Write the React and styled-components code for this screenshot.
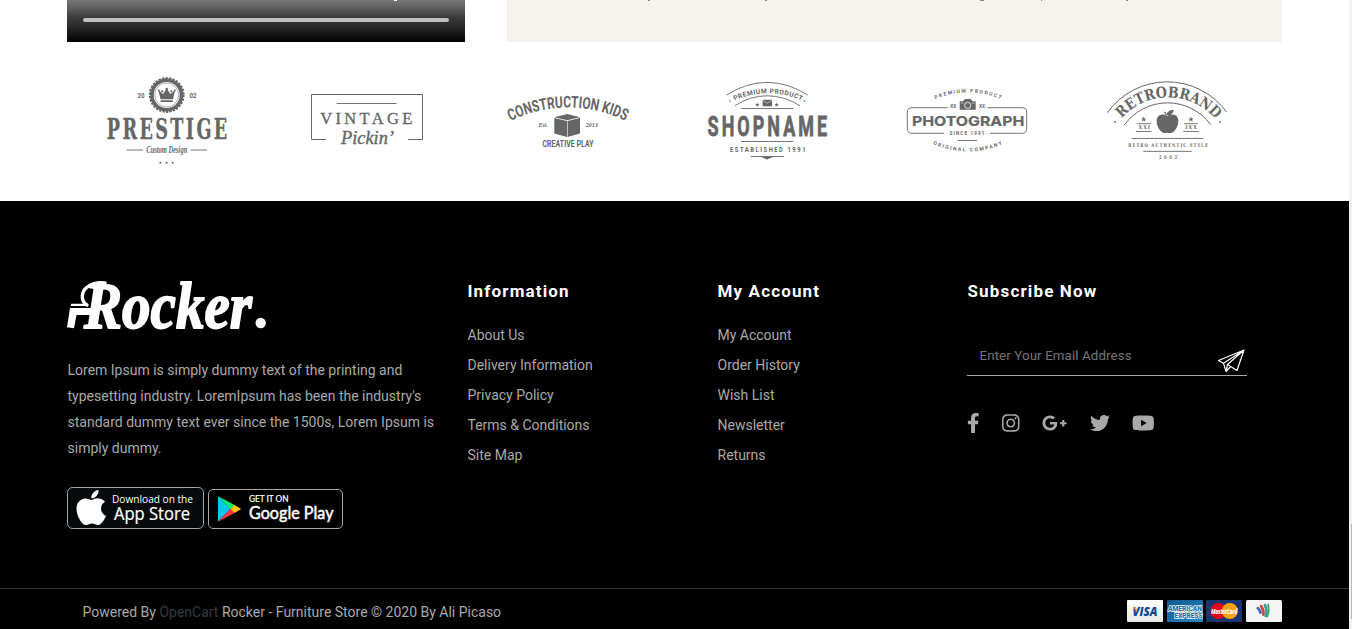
import React from "react";
import styled, { createGlobalStyle } from "styled-components";
import { FaApple, FaFacebookF, FaInstagram, FaGooglePlusG, FaTwitter, FaYoutube } from "react-icons/fa";

const GlobalStyle = createGlobalStyle`
  * { box-sizing: border-box; }
  html, body { margin: 0; background: #fff; overflow: hidden; }
  body { font-family: Roboto, "Liberation Sans", sans-serif; font-size: 14px; }
`;

const Page = styled.div`
  display: flex;
  width: 1352px;
  height: 629px;
  overflow: hidden;
`;
const Content = styled.main`
  width: 1349px;
  display: flex;
  flex-direction: column;
`;
const ScrollTrack = styled.div`
  width: 3px;
  background: #f1f1f1;
  padding: 524px 0 0 2px;
`;
const ScrollThumb = styled.div`
  height: 95px;
  background: #b9b9b9;
`;

const MediaRow = styled.section`
  display: flex;
  gap: 42px;
  height: 42px;
  padding-left: 67px;
`;
const Video = styled.div`
  width: 398px;
  background: linear-gradient(#777 0, #5a5a5a 22%, #3a3a3a 42%, #2a2a2a 62%, #171717 80%, #000 100%);
  svg { display: block; }
`;
const VideoProgress = styled.div`
  height: 4px;
  margin: 17px 16px 0;
  border-radius: 2px;
  background: #bfbfbf;
`;
const Testimonial = styled.div`
  width: 775px;
  background: #f6f2ed;
  svg { display: block; }
`;

const Brands = styled.section`
  display: flex;
  height: 159px;
  padding: 23px 0 0 67px;
`;
const BrandMark = styled.svg`
  width: 200px;
  height: 110px;
  fill: #666;
  overflow: visible;
`;

const Footer = styled.footer`
  flex: 1;
  background: #000;
  color: #a9a9a9;
`;
const FooterMain = styled.div`
  display: flex;
  height: 387px;
  padding: 80px 67px 0 67.5px;
`;
const About = styled.div`
  width: 400px;
`;
const RockerLogo = styled.svg`
  display: block;
  width: 200px;
  height: 50px;
  margin-left: -0.5px;
  fill: #fff;
  overflow: visible;
`;
const Blurb = styled.p`
  width: 380px;
  margin: 26px 0 0;
  line-height: 26px;
  white-space: pre-line;
`;
const Badges = styled.div`
  display: flex;
  align-items: flex-end;
  gap: 4px;
  margin: 26px 0 0 -0.5px;
  svg { display: block; }
`;
const Column = styled.div`
  width: ${(p) => p.$width || 250}px;
`;
const Heading = styled.h5`
  margin: 0;
  color: #fff;
  font-size: 17px;
  font-weight: 700;
  line-height: 20px;
  letter-spacing: 1.15px;
`;
const Links = styled.ul`
  margin: 19px 0 0;
  padding: 0;
  list-style: none;
  line-height: 30px;
`;
const Subscribe = styled.div`
  display: flex;
  justify-content: space-between;
  width: 280px;
  height: 41px;
  margin: 34px 0 0 -0.5px;
  padding: 0 2px 0 12.5px;
  border-bottom: 1px solid #a9a9a9;
`;
const Placeholder = styled.span`
  color: #757575;
  font-size: 13.33px;
  line-height: 41px;
  letter-spacing: 0.1px;
`;
const Plane = styled.svg`
  width: 28px;
  height: 24px;
  margin-top: 14px;
  fill: none;
  stroke: #fff;
  stroke-width: 1.2;
  stroke-linejoin: round;
`;
const Social = styled.div`
  display: flex;
  gap: 22.5px;
  margin: 37px 0 0 -0.5px;
  color: #a9a9a9;
`;
const SocialLink = styled.span`
  flex: none;
  width: ${(p) => p.$width}px;
  height: 20px;
  svg { display: block; width: 100%; height: 100%; }
`;
const BottomBar = styled.div`
  display: flex;
  justify-content: space-between;
  height: 41px;
  padding: 11px 67px 0 82.5px;
  border-top: 1px solid #333;
  line-height: 24px;
`;
const Dim = styled.span`
  color: #333b42;
`;
const Cards = styled.svg`
  width: 155px;
  height: 22px;
`;

const SANS = 'Roboto, sans-serif';
const SERIF = '"Liberation Serif", serif';
const SLAB = '"DejaVu Serif Condensed", "DejaVu Serif", serif';

function Label({ x, y, w, size, font = SANS, weight = 700, italic, children, ...rest }) {
  return (
    <text x={x} y={y} textLength={w} lengthAdjust="spacingAndGlyphs" fontFamily={font}
      fontSize={size} fontWeight={weight} fontStyle={italic ? "italic" : "normal"} {...rest}>{children}</text>
  );
}

/* Narrow capitals: glyphs are squeezed horizontally and spaced evenly over the width. */
function Narrow({ x, y, w, size, k = 0.8, font = SANS, weight = 700, children, ...rest }) {
  return (
    <text transform={`translate(${x} ${y}) scale(${k} 1)`} textLength={w / k} fontFamily={font}
      fontSize={size} fontWeight={weight} {...rest}>{children}</text>
  );
}

function Arced({ id, d, w, size, font = SANS, weight = 700, adjust = "spacing", children, ...rest }) {
  return (
    <>
      <path id={id} d={d} fill="none" />
      <text fontFamily={font} fontSize={size} fontWeight={weight} textLength={w} lengthAdjust={adjust} {...rest}>
        <textPath href={`#${id}`} textLength={w} lengthAdjust={adjust}>{children}</textPath>
      </text>
    </>
  );
}

function Line({ x1, x2, y, h = 0.9 }) {
  return <rect x={x1} y={y - h / 2} width={x2 - x1} height={h} />;
}

function Star({ x, y, r }) {
  const pts = Array.from({ length: 10 }, (_, i) => {
    const a = (Math.PI * i) / 5 - Math.PI / 2;
    const q = i % 2 ? r * 0.42 : r;
    return `${x + q * Math.cos(a)},${y + q * Math.sin(a)}`;
  }).join(" ");
  return <polygon points={pts} />;
}

function Prestige() {
  return (
    <BrandMark viewBox="0 0 200 110">
      <circle cx="99.7" cy="30" r="16.6" />
      <circle cx="99.7" cy="30" r="16.9" fill="none" stroke="#666" strokeWidth="2" strokeDasharray="2.3 1.24" />
      <circle cx="99.7" cy="30" r="13" fill="#fff" />
      <circle cx="99.7" cy="30" r="12" fill="none" stroke="#666" strokeWidth="0.5" />
      <path d="M91.5 25.3 96 29 99.7 23.5 103.4 29 108 25.3 106 34.2H93.5zM93.6 35.2h12.2v1.7H93.6z" />
      <circle cx="99.7" cy="24" r="1.3" /><circle cx="95.2" cy="26.3" r="1.1" /><circle cx="104.3" cy="26.3" r="1.1" />
      <circle cx="91.8" cy="25.6" r="1" /><circle cx="107.8" cy="25.6" r="1" />
      <Label x={70.5} y={32.8} w={7} size={6.6}>20</Label>
      <Label x={122.5} y={32.8} w={7} size={6.6}>02</Label>
      <Narrow x={39.8} y={74} w={120.5} size={28} k={0.7} font={SLAB} stroke="#666" strokeWidth="0.3">PRESTIGE</Narrow>
      <Line x1={59.7} x2={76} y={85} /><Line x1={123.7} x2={140} y={85} />
      <Label x={79.3} y={87.8} w={41} size={10} font={SERIF} italic>Custom Design</Label>
      <circle cx="93.3" cy="97.7" r="1" /><circle cx="99.7" cy="97.7" r="1" /><circle cx="105.7" cy="97.7" r="1" />
    </BrandMark>
  );
}

function Vintage() {
  return (
    <BrandMark viewBox="0 0 200 110">
      <path d="M59 74.5H44.5V29.5H155.5V74.5H141.3" fill="none" stroke="#666" />
      <Line x1={69.7} x2={129.7} y={38.5} />
      <text x="53.3" y="58.6" textLength="92" fontFamily={SERIF} fontSize="16.5" stroke="#666" strokeWidth="0.3">VINTAGE</text>
      <Label x={74} y={79.3} w={53} size={19} font={SERIF} weight={400} italic stroke="#666" strokeWidth="0.4">Pickin’</Label>
    </BrandMark>
  );
}

function ConstructionKids() {
  return (
    <BrandMark viewBox="0 0 200 110">
      <Arced id="kids" d="M43.5 56A131 131 0 0 1 159 56" w={119} size={16.2} adjust="spacingAndGlyphs">CONSTRUCTION KIDS</Arced>
      <path d="M87.3 52.2 100.3 49 113 52.2 100.3 55.2zM87.3 52.9 100 56V72L87.3 68.4zM113 52.9 100.6 56V72L113 68.4z" />
      <Label x={71.5} y={61.8} w={9.5} size={6.5} font={SERIF} italic>Est.</Label>
      <Label x={118.7} y={61.8} w={12} size={6.5} font={SERIF} italic>2013</Label>
      <Label x={75.5} y={82} w={51} size={9.3}>CREATIVE PLAY</Label>
    </BrandMark>
  );
}

function Shopname() {
  return (
    <BrandMark viewBox="0 0 200 110">
      <g fill="none" stroke="#666" strokeWidth="0.9">
        <path d="M59.7 30Q79 17.4 100 17.4T140.7 30" />
        <path d="M68 40.7Q83 30.8 100 30.8T133 40.7" />
      </g>
      <Arced id="shop" d="M67.5 35.5A82 82 0 0 1 134.5 35.5" w={69} size={6.6}>PREMIUM PRODUCT</Arced>
      <circle cx="63" cy="36" r="0.8" /><circle cx="137.3" cy="36" r="0.8" />
      <rect x="95.7" y="34.7" width="9.4" height="6.6" />
      <path d="M96 35.3 100.4 38.3 104.8 35.3" fill="none" stroke="#fff" strokeWidth="0.5" />
      <Star x={90.3} y={39.7} r={2.3} /><Star x={109.7} y={39.7} r={2.3} />
      <Line x1={74} x2={126.3} y={43.6} />
      <Narrow x={40.6} y={70.6} w={119.5} size={28} k={0.64} stroke="#666" strokeWidth="0.8">SHOPNAME</Narrow>
      <Line x1={74} x2={126.3} y={76.5} />
      <Narrow x={63} y={87.2} w={75.5} size={7.8} k={0.75}>ESTABLISHED 1991</Narrow>
      <Line x1={83.7} x2={117} y={91.4} />
      <path d="M93 91.4H107L100 94.4z" />
    </BrandMark>
  );
}

function Photograph() {
  return (
    <BrandMark viewBox="0 0 200 110">
      <Arced id="photoTop" d="M68.3 34.3A82 82 0 0 1 134 34.3" w={67} size={5}>PREMIUM PRODUCT</Arced>
      <Label x={83.3} y={43.4} w={6} size={5.4}>XX</Label><Label x={112} y={43.4} w={6} size={5.4}>XX</Label>
      <path d="M92.7 36.2H96L98 34H103.5L105.5 36.2H108.7V44.7H92.7z" />
      <circle cx="100.7" cy="40.4" r="3.1" fill="none" stroke="#fff" strokeWidth="0.8" />
      <path d="M94 38h2.4M105 38h2.4" stroke="#fff" strokeWidth="0.6" />
      <path d="M80.7 42.7H45Q40.3 42.7 40.3 47.5V63.5Q40.3 68.3 45 68.3H77M123 68.3H155Q159.7 68.3 159.7 63.5V47.5Q159.7 42.7 155 42.7H120.3" fill="none" stroke="#666" strokeWidth="0.9" />
      <Label x={45} y={60.7} w={112.3} size={13.8} font="Inter, sans-serif" stroke="#666" strokeWidth="0.2">PHOTOGRAPH</Label>
      <text x="80" y="69.9" textLength="40" fontFamily={SANS} fontSize="4.6" fontWeight="700">·SINCE 1991·</text>
      <Line x1={90.7} x2={110} y={75.4} />
      <Arced id="photoBottom" d="M66 79A86 86 0 0 0 136 79" w={71} size={5}>ORIGINAL COMPANY</Arced>
    </BrandMark>
  );
}

function Retrobrand() {
  return (
    <BrandMark viewBox="0 0 200 110">
      <g fill="none" stroke="#666" strokeWidth="1">
        <path d="M40.3 47.7A73.5 73.5 0 0 1 159.7 47.2" />
        <path d="M57.3 60A53.5 53.5 0 0 1 143.7 59.6" />
      </g>
      <Arced id="retro" d="M54.7 53.3A62 62 0 0 1 149 55" w={106} size={15} font={SLAB} adjust="spacingAndGlyphs">RETROBRAND</Arced>
      <circle cx="48" cy="57" r="0.9" /><circle cx="153" cy="57" r="0.9" />
      <Star x={76.7} y={54.4} r={2.8} /><Star x={124} y={54.4} r={2.8} />
      <Line x1={70.3} x2={84} y={58.7} /><Line x1={117} x2={130.7} y={58.7} />
      <text x="71.5" y="64.4" textLength="11.5" fontFamily={SLAB} fontSize="5.2" fontWeight="700">XXI</text>
      <text x="118.3" y="64.4" textLength="11.5" fontFamily={SLAB} fontSize="5.2" fontWeight="700">IXX</text>
      <Line x1={69} x2={84.7} y={66.4} /><Line x1={116.3} x2={131.7} y={66.4} />
      <path d="M100 51.2C103 49 108 48.6 110.3 52 113 57 110 64 106 67.3 104 68.8 102.3 67.7 100.5 67.7S97 68.8 95 67.3C91 64 88 57 90.6 52.3 92.6 48.8 97 49 100 51.2zM99.7 50.2C99.6 46.8 103 44.8 106.8 45 106.2 48.5 103 50.6 99.7 50.2zM97 47.2 98 46.6Q99.4 48 99.8 50.8L99 51Q98.5 48.7 97 47.2z" />
      <Line x1={64.7} x2={136.3} y={73.4} />
      <Narrow x={61.3} y={82} w={79.5} size={5.2} font={SLAB}>RETRO AUTHENTIC STYLE</Narrow>
      <Line x1={76.3} x2={124.7} y={86.3} />
      <Narrow x={92} y={94} w={18} size={5.2} font={SLAB}>2002</Narrow>
    </BrandMark>
  );
}

function AppStoreBadge() {
  return (
    <svg width="137" height="42" viewBox="0 0 137 42">
      <rect x="0.5" y="0.5" width="136" height="41" rx="5" fill="#060a0b" stroke="#a6a6a6" />
      <g transform="translate(4.2 0.5)"><FaApple size={40} color="#fff" /></g>
      <g fill="#fff" fontFamily='"Open Sans", sans-serif'>
        <text x="45" y="15.6" fontSize="10.8" textLength="81" lengthAdjust="spacingAndGlyphs">Download on the</text>
        <text x="47" y="33" fontSize="17.8" fontWeight="500" textLength="76" lengthAdjust="spacingAndGlyphs" stroke="#fff" strokeWidth="0.2">App Store</text>
      </g>
    </svg>
  );
}

function GooglePlayBadge() {
  return (
    <svg width="135" height="40" viewBox="0 0 135 40">
      <rect x="0.5" y="0.5" width="134" height="39" rx="4.5" fill="#000" stroke="#a6a6a6" />
      <path d="M10 7.5V32.5L22.3 20z" fill="#00c8f8" />
      <path d="M10 7.2 26.7 16 22.3 20.2z" fill="#00ee76" />
      <path d="M26.5 16 33.2 20 26.5 24 22.3 20z" fill="#ffc900" />
      <path d="M10 32.8 26.7 24 22.3 19.8z" fill="#f9374b" />
      <g fill="#fff" stroke="#fff">
        <text x="41" y="13" fontFamily="Lato, sans-serif" fontSize="8.6" strokeWidth="0.2" textLength="39.5" lengthAdjust="spacingAndGlyphs">GET IT ON</text>
        <text x="41" y="30.4" fontFamily="Lato, sans-serif" fontSize="17.6" strokeWidth="0.5" textLength="84.5" lengthAdjust="spacingAndGlyphs">Google Play</text>
      </g>
    </svg>
  );
}

function PaymentCards() {
  return (
    <Cards viewBox="0 0 155 22">
      <defs>
        <linearGradient id="amex" x2="1" y2="1"><stop stopColor="#12568c" /><stop offset="1" stopColor="#2589c8" /></linearGradient>
        <linearGradient id="visa" y2="1" x2="0"><stop stopColor="#fff" /><stop offset="1" stopColor="#e8e8e8" /></linearGradient>
      </defs>
      <rect width="36" height="22" rx="1" fill="url(#visa)" />
      <text x="5.5" y="15.6" fontFamily="Open Sans, sans-serif" fontStyle="italic" fontWeight="800" fontSize="11.5" textLength="25" lengthAdjust="spacingAndGlyphs" fill="#0e4595">VISA</text>
      <path d="M5.8 7.3H9L10 12.5Q8.8 9 5.8 7.3z" fill="#f2ae14" />
      <rect x="40" width="36" height="22" rx="1" fill="url(#amex)" />
      <g fill="#1b6fa8" stroke="#fff" strokeWidth="1.3" paintOrder="stroke" fontFamily={SANS} fontWeight="900" fontSize="7.6">
        <text x="41" y="10.8" textLength="34" lengthAdjust="spacingAndGlyphs">AMERICAN</text>
        <text x="47.5" y="18.3" textLength="28" lengthAdjust="spacingAndGlyphs">EXPRESS</text>
      </g>
      <rect x="79" width="36" height="22" rx="1" fill="#16366f" />
      <circle cx="91.5" cy="11" r="8" fill="#e30613" /><circle cx="102.8" cy="11" r="8" fill="#fca311" />
      <text x="84.2" y="13.6" fontFamily={SANS} fontStyle="italic" fontWeight="900" fontSize="6.5" textLength="26" lengthAdjust="spacingAndGlyphs" fill="#fff">MasterCard</text>
      <rect x="119" width="36" height="22" rx="1.5" fill="#f5f5f5" />
      <g fill="none" strokeWidth="2.8" strokeLinecap="round">
        <path d="M130.8 8.2Q133 10 133.3 12.5" stroke="#3b6fb6" />
        <path d="M134 6Q137 10 136.3 14.5" stroke="#d8433b" />
        <path d="M138 5.3Q140.5 10 138.7 15.8" stroke="#3f9c9c" />
        <path d="M141 4.5Q142.8 10.5 140.2 16.5" stroke="#2fae62" strokeWidth="1.8" />
      </g>
    </Cards>
  );
}

const information = ["About Us", "Delivery Information", "Privacy Policy", "Terms & Conditions", "Site Map"];
const account = ["My Account", "Order History", "Wish List", "Newsletter", "Returns"];
const social = [
  [FaFacebookF, 12.5], [FaInstagram, 17.5], [FaGooglePlusG, 25], [FaTwitter, 20], [FaYoutube, 22.5],
];

function LinkColumn({ title, items }) {
  return (
    <Column>
      <Heading>{title}</Heading>
      <Links>{items.map((t) => <li key={t}>{t}</li>)}</Links>
    </Column>
  );
}

export default function App() {
  return (
    <Page>
      <GlobalStyle />
      <Content>
        <MediaRow>
          <Video>
            <svg width="398" height="1" fill="#fff"><path d="M327 0h3v1h-3z" /></svg>
            <VideoProgress />
          </Video>
          <Testimonial>
            <svg width="775" height="1" fill="#8a8886">
              <path d="M141 0h2v1h-2zM258 0h2v1h-2zM473 0h4v1h-4zM534 0h1v1h-1zM619 0h2v1h-2z" />
            </svg>
          </Testimonial>
        </MediaRow>
        <Brands>
          <Prestige /><Vintage /><ConstructionKids /><Shopname /><Photograph /><Retrobrand />
        </Brands>
        <Footer>
          <FooterMain>
            <About>
              <RockerLogo viewBox="0 0 200 50">
                <text x="17" y="46.6" fontFamily={SERIF} fontStyle="italic" fontWeight="700" fontSize="66" textLength="168" lengthAdjust="spacingAndGlyphs" stroke="#fff" strokeWidth="1.8" strokeLinejoin="round">Rocker</text>
                <circle cx="193.7" cy="42" r="5.2" />
                <path d="M20 24C13 20 14 9 22 5 27 1.6 33 1.4 38 2" fill="none" stroke="#fff" strokeWidth="3.4" strokeLinecap="round" />
                <path d="M4 22.8H19V25H4zM3 27H28V34H9.5L7 47.2 0 46.2z" />
              </RockerLogo>
              <Blurb>{"Lorem Ipsum is simply dummy text of the printing and\ntypesetting industry. LoremIpsum has been the industry's\nstandard dummy text ever since the 1500s, Lorem Ipsum is\nsimply dummy."}</Blurb>
              <Badges><AppStoreBadge /><GooglePlayBadge /></Badges>
            </About>
            <LinkColumn title="Information" items={information} />
            <LinkColumn title="My Account" items={account} />
            <Column $width={314}>
              <Heading>Subscribe Now</Heading>
              <Subscribe>
                <Placeholder>Enter Your Email Address</Placeholder>
                <Plane viewBox="0 0 28 24">
                  <path d="M1.5 11.5 27 1 20 21.5 10.5 15.5 27 1 6.5 14.2zM6.5 14.2 9 22.5 10.5 15.5M9 22.5 13.5 17.5" />
                </Plane>
              </Subscribe>
              <Social>
                {social.map(([Icon, width]) => <SocialLink key={width} $width={width}><Icon /></SocialLink>)}
              </Social>
            </Column>
          </FooterMain>
          <BottomBar>
            <span>Powered By <Dim>OpenCart</Dim> Rocker - Furniture Store © 2020 By Ali Picaso</span>
            <PaymentCards />
          </BottomBar>
        </Footer>
      </Content>
      <ScrollTrack><ScrollThumb /></ScrollTrack>
    </Page>
  );
}
